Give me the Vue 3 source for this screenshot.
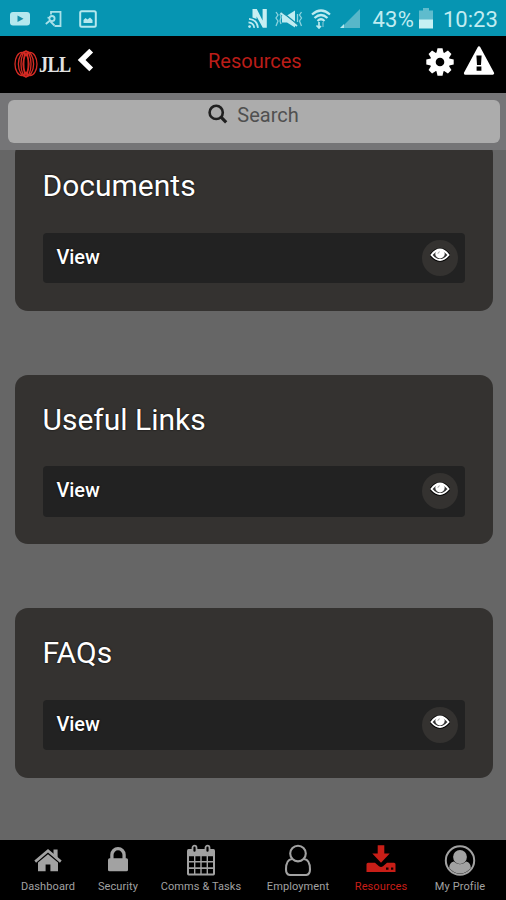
<script setup>
const cards = ['Documents', 'Useful Links', 'FAQs']
const teeth = [0, 45, 90, 135]
const tabs = [
  { id: 'home', label: 'Dashboard' },
  { id: 'lock', label: 'Security' },
  { id: 'calendar', label: 'Comms & Tasks' },
  { id: 'user', label: 'Employment' },
  { id: 'download', label: 'Resources', active: true },
  { id: 'profile', label: 'My Profile' },
]
</script>

<template>
  <div class="screen">
    <div class="status">
      <svg class="s-video" width="20" height="14" viewBox="0 0 20 14"><rect width="20" height="13.5" rx="3" fill="#b5e8ee" /><path d="M7.5 3.5 13.5 6.8 7.5 10Z" fill="#168fa9" /></svg>
      <svg class="s-phone" width="18" height="18" viewBox="0 0 18 18" fill="none" stroke="#a9e1e9" stroke-width="1.8"><path d="M6 4.5V1.8H15.5V16H9.5" /><circle cx="7" cy="8.6" r="2.6" /><path d="M5 10.5 .8 14M5.5 11.5 9.5 15.5M2.5 7.5 4.5 8" /></svg>
      <svg class="s-image" width="18" height="18" viewBox="0 0 18 18"><rect x="1.2" y="1.2" width="15.6" height="15.6" rx="1.5" fill="none" stroke="#b5e8ee" stroke-width="2" /><path d="M4.5 13V10L6.5 8 8.5 9.5 11 7.5 13.5 10V13Z" fill="#b5e8ee" /></svg>
      <span class="grow"></span>
      <svg class="s-nfc" width="20" height="20" viewBox="0 0 20 20"><path d="M4.5 8.5V0H8.8L14.6 11.5V0H18.8V18.8H14.8L8.6 7.4V10Z" fill="#c6eff3" /><g fill="none" stroke="#bdebf0" stroke-width="1.7"><path d="M1 9.8Q9 10.5 10 18.8M.5 13.4Q5.5 13.8 6.3 18.8" /></g><circle cx="1.6" cy="17.6" r="1.4" fill="#bdebf0" /></svg>
      <svg class="s-mute" width="28" height="20" viewBox="0 0 28 20"><path d="M7 6.5H12L20 1.5V18.5L12 13.5H7Z" fill="#c0ecf1" /><path d="M6.5 2.5 22.5 15.5" stroke="#178fa9" stroke-width="1.6" /><path d="M5.5 4 22 17" stroke="#c0ecf1" stroke-width="1.8" /><path d="M1 3 3 6 1 9 3 12 1 17M5 5 6 8 5 12 6 15M26.5 3 24.5 6 26.5 9 24.5 12 26.5 17M22.5 5V13" fill="none" stroke="#8dd3df" stroke-width="1.3" /></svg>
      <svg class="s-wifi" width="20" height="20" viewBox="0 0 20 20" fill="none" stroke="#bdebf0" stroke-width="2.2"><path d="M1 5.5Q10-2.5 19 5.5M3.5 9Q10 3 16.5 9M6.5 12Q10 8.5 13.5 12" /><path d="M8 19V13M5.5 16.5 8 19 10 17" stroke-width="1.7" /><path d="M12 13V18" stroke-width="1.5" stroke="#64bacb" /></svg>
      <svg class="s-signal" width="20" height="20" viewBox="0 0 20 20"><path d="M20 0V19H1Z" fill="#58b7c9" /><path d="M0 19 4 15V19Z" fill="#b5e8ee" /></svg>
      <span class="percent">43%</span>
      <svg class="s-battery" width="14" height="21" viewBox="0 0 14 21"><path d="M4 0H10V2.5H14V12H0V2.5H4Z" fill="#5fbccd" /><path d="M0 11.5H14V20.5H0Z" fill="#c6f0f3" /></svg>
      <span class="clock">10:23</span>
    </div>

    <header class="header">
      <svg class="ball" width="24" height="28" viewBox="0 0 24 28" fill="none" stroke="#d62b24" stroke-width="1.3"><ellipse cx="8" cy="14" rx="7" ry="11.6" /><ellipse cx="16" cy="14" rx="7" ry="11.6" /><ellipse cx="12" cy="14" rx="7.6" ry="12.6" /><ellipse cx="12" cy="14" rx="5" ry="12.8" /><ellipse cx="12" cy="14" rx="2.2" ry="12.8" /></svg>
      <span class="brand">JLL</span>
      <svg class="back" width="17" height="24" viewBox="0 0 17 24" fill="none" stroke="#fff" stroke-width="5.4"><path d="M14.2 2.6 4.6 12 14.2 21.4" /></svg>
      <h1 class="title">Resources</h1>
      <svg class="gear" width="28" height="28" viewBox="-14 -14 28 28"><g fill="#fff"><path v-for="a in teeth" :key="a" d="M-2.5-13.7H2.5L3.8-8V8L2.5 13.7H-2.5L-3.8 8V-8Z" :transform="`rotate(${a})`" /><circle r="10" /></g><circle r="4.3" fill="#000" /></svg>
      <svg class="warn" width="32" height="30" viewBox="0 0 32 30"><path d="M16 1.9 29.6 27.2H2.4Z" fill="#fff" stroke="#fff" stroke-width="3" stroke-linejoin="round" /><path d="M13.4 9.5H18.6L18 19H14ZM13.6 20.5H18.4V24.7H13.6Z" fill="#000" /></svg>
    </header>

    <div class="search-bar">
      <div class="search">
        <svg width="20" height="20" viewBox="0 0 20 20" fill="none" stroke="#202020"><circle cx="8.2" cy="8.4" r="6.6" stroke-width="2.6" /><path d="M13 13.2 18.2 18.4" stroke-width="3.2" /></svg>
        <span>Search</span>
      </div>
    </div>

    <main class="content">
      <div class="list">
        <section v-for="c in cards" :key="c" class="card">
          <h2>{{ c }}</h2>
          <div class="row">
            <span>View</span>
            <div class="eye">
              <svg width="20" height="16" viewBox="0 0 20 16"><path d="M1.4 8Q10-3 18.6 8Q10 18 1.4 8Z" fill="#222" stroke="#000" stroke-width="3.6" /><path d="M1.4 8Q10-3 18.6 8Q10 18 1.4 8Z" fill="#333" stroke="#fff" stroke-width="1.9" /><circle cx="10" cy="6.8" r="4.7" fill="#fff" /><path d="M7.9 6.8Q8 4.9 9.8 4.8" fill="none" stroke="#999" stroke-width=".9" /></svg>
            </div>
          </div>
        </section>
      </div>
    </main>

    <nav class="tabs">
      <div v-for="t in tabs" :key="t.id" class="tab" :class="{ active: t.active }">
        <svg width="32" height="32" viewBox="0 0 32 32">
          <g v-if="t.id === 'home'" fill="currentColor"><path d="M6 18.5 16 10.2 26 18.5V27.2H18.4V20.5H13.6V27.2H6Z" /><path d="M3.2 17.6 16 6.8 28.8 17.6" fill="none" stroke="currentColor" stroke-width="2.7" /><path d="M21.5 5.4H25.6V14.5L21.5 11Z" /></g>
          <g v-else-if="t.id === 'lock'"><rect x="6" y="14.3" width="20" height="13" rx="1.5" fill="currentColor" /><path d="M9.9 15V10.8A6.1 6.1 0 0 1 22.1 10.8V15" fill="none" stroke="currentColor" stroke-width="3.3" /></g>
          <g v-else-if="t.id === 'calendar'"><path d="M3.5 5H28.5Q30 5 30 7V29.5Q30 31.5 28.5 31.5H3.5Q2 31.5 2 29.5V7Q2 5 3.5 5Z" fill="currentColor" /><path v-for="y in [12.3, 18.6, 24.9]" :key="y" :d="`M4 ${y}H9V${y + 4.7}H4ZM10.4 ${y}H15.3V${y + 4.7}H10.4ZM16.7 ${y}H21.6V${y + 4.7}H16.7ZM23 ${y}H28V${y + 4.7}H23Z`" fill="#000" /><g fill="#000" stroke="currentColor" stroke-width="1.8"><rect x="7.5" y="1.7" width="4" height="7" rx="2" /><rect x="20.5" y="1.7" width="4" height="7" rx="2" /></g></g>
          <g v-else-if="t.id === 'user'" fill="none" stroke="currentColor" stroke-width="2.1"><circle cx="16" cy="9.6" r="7.8" /><path d="M10 15C5 15.5 4 20 4 25.5Q4 31 8.5 31H23.5Q28 31 28 25.5C28 20 27 15.5 22 15" /></g>
          <g v-else-if="t.id === 'download'"><path d="M12.7 1.3H19.3V9.5H24.7L16 18.7 7.3 9.5H12.7Z" fill="currentColor" /><path d="M3 18.7H10L14 22.3Q16 23.8 18 22.3L22 18.7H29Q30.5 18.7 30.5 20.2V28H1.5V20.2Q1.5 18.7 3 18.7Z" fill="currentColor" /><path d="M21 23.5H23.5V25.7H21ZM26 23.5H28.3V25.7H26Z" fill="#180000" /></g>
          <g v-else><circle cx="16" cy="16.5" r="14.2" fill="none" stroke="currentColor" stroke-width="2" /><circle cx="16" cy="13" r="6.9" fill="currentColor" /><path d="M9.8 17.5Q16 22.8 22.2 17.5Q26.8 18.5 26.8 24Q22 29.5 16 29.5T5.2 24Q5.2 18.5 9.8 17.5Z" fill="currentColor" /></g>
        </svg>
        <span>{{ t.label }}</span>
      </div>
    </nav>
  </div>
</template>

<style>
body { background: #666; }
</style>

<style scoped>
.screen { width: 506px; height: 900px; display: flex; flex-direction: column; overflow: hidden; background: #666; font-family: Roboto, sans-serif; }
svg { display: block; flex: none; }
h1, h2 { margin: 0; font-weight: 400; }
.status { flex: none; height: 36px; box-sizing: border-box; padding: 0 8px 0 10px; display: flex; align-items: center; background: #0695b2; color: #c1ecf1; font-size: 22px; }
.s-video { margin-top: 2px; }
.s-phone { margin: 2px 0 0 15px; }
.s-image { margin: 1px 0 0 16px; }
.grow { flex: 1; }
.s-nfc { margin-top: 1px; }
.s-mute { margin: 1px 0 0 7px; }
.s-wifi { margin: 1px 0 0 8px; }
.s-signal { margin: 1px 0 0 9px; }
.percent { margin-left: 12.5px; width: 41.5px; margin-top: 3px; white-space: nowrap; letter-spacing: .2px; }
.s-battery { margin-left: 5px; }
.clock { margin-left: 10px; width: 55px; margin-top: 3px; }
.header { flex: none; height: 56.5px; box-sizing: border-box; padding: 0 11px 5px 14px; display: flex; align-items: center; background: #000; }
.ball { margin-top: 5px; }
.brand { width: 33px; margin: 5px 0 0 1px; font: bold 24px/24px "Liberation Serif", serif; letter-spacing: -.8px; color: #e2e2e2; white-space: nowrap; transform: scaleX(.76); transform-origin: left center; }
.back { margin: -4px 0 0 4.5px; }
.title { margin: -1px 0 0 114.5px; width: 94px; font-size: 20px; line-height: 24px; color: #bb1d18; }
.gear { margin-left: auto; }
.warn { margin: -1px 0 0 9px; }
.search-bar { flex: none; height: 57.5px; box-sizing: border-box; padding: 7.5px 6.5px 7.5px 7.5px; background: #757577; }
.search { height: 42.5px; border-radius: 6px; background: #acacac; display: flex; justify-content: center; align-items: flex-start; gap: 9px; padding-top: 4px; box-sizing: border-box; color: #505050; font-size: 20px; line-height: 22px; letter-spacing: 0; }
.content { flex: 1; min-height: 0; overflow: hidden; }
.list { display: flex; flex-direction: column; gap: 64px; margin-top: -9px; padding: 0 13.5px 0 14.5px; }
.card { flex: none; height: 169.5px; box-sizing: border-box; padding: 27px 28px 28px; border-radius: 13px; background: #343230; color: #fff; }
h2 { font-size: 30px; line-height: 36px; text-shadow: 0 0 2px #000; }
.row { margin-top: 28.5px; height: 50.5px; box-sizing: border-box; padding: 0 6.5px 0 14px; display: flex; justify-content: space-between; align-items: center; border-radius: 4px; background: #222; font-size: 20px; text-shadow: 0 0 2px #000; }
.row span { margin-top: -2px; font-weight: 500; letter-spacing: -.1px; }
.eye { width: 36px; height: 36px; border-radius: 50%; display: flex; justify-content: center; background: #343230; box-sizing: border-box; padding-top: 7.5px; }
.tabs { flex: none; height: 60px; box-sizing: border-box; padding-left: 14px; display: grid; grid-template-columns: 68px 72px 94px 100px 66px 92px; background: #000; color: #a2a2a2; }
.tab { display: flex; flex-direction: column; align-items: center; padding-top: 4px; font-size: 11px; line-height: 14px; letter-spacing: .1px; white-space: nowrap; }
.tab span { margin-top: 4px; }
.active { color: #c81e17; }
</style>
